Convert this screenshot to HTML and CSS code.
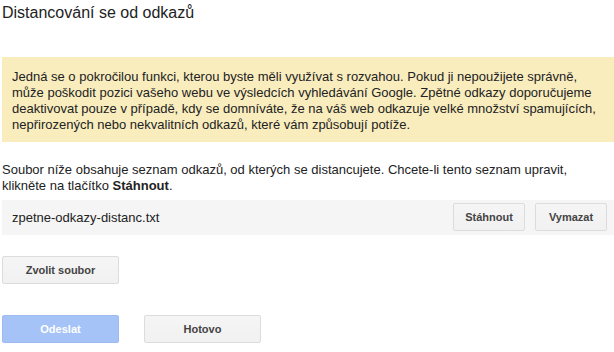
FILE: index.html
```html
<!DOCTYPE html>
<html>

<head>
  <meta charset="utf-8">
  <title>Distancování se od odkazů</title>
  <link rel="stylesheet" href="styles.css">
</head>

<body>
  <h1 class="title">Distancování se od odkazů</h1>

  <div class="warning">
    Jedná se o pokročilou funkci, kterou byste měli využívat s rozvahou. Pokud ji nepoužijete správně,
    může poškodit pozici vašeho webu ve výsledcích vyhledávání Google. Zpětné odkazy doporučujeme
    deaktivovat pouze v případě, kdy se domníváte, že na váš web odkazuje velké množství spamujících,
    nepřirozených nebo nekvalitních odkazů, které vám způsobují potíže.
  </div>

  <p class="desc">
    Soubor níže obsahuje seznam odkazů, od kterých se distancujete. Chcete-li tento seznam upravit,
    klikněte na tlačítko <b>Stáhnout</b>.
  </p>

  <div class="file-row">
    <span class="file-name">zpetne-odkazy-distanc.txt</span>
    <button class="btn">Stáhnout</button>
    <button class="btn">Vymazat</button>
  </div>

  <div class="choose">
    <button class="btn btn-wide">Zvolit soubor</button>
  </div>

  <div class="actions">
    <button class="btn btn-wide btn-primary" disabled>Odeslat</button>
    <button class="btn btn-wide">Hotovo</button>
  </div>
</body>

</html>
```

FILE: styles.css
```css
* {
  box-sizing: border-box;
}

body {
  margin: 0 0 0 2px;
  font-family: 'Liberation Sans', Arial, sans-serif;
  font-size: 13px;
  color: #222;
  background: white;
}

.title {
  margin: 0 0 35px;
  padding-top: 4px;
  font-size: 16px;
  font-weight: normal;
  line-height: 18px;
  color: #222;
}

.warning {
  background: #f9edbe;
  padding: 12px 10px 9px;
  line-height: 16px;
}

.desc {
  margin: 20px 0 6px;
  line-height: 16px;
}

.file-row {
  display: flex;
  align-items: center;
  gap: 10px;
  background: #f5f5f5;
  padding: 3px 7px 4px 10px;
}

.file-name {
  flex: 1;
}

.btn {
  height: 28px;
  min-width: 72px;
  padding: 0 8px;
  border: 1px solid #dcdcdc;
  border-radius: 2px;
  background: linear-gradient(#f5f5f5, #f1f1f1);
  color: #444;
  font-family: 'Liberation Sans', Arial, sans-serif;
  font-size: 11px;
  font-weight: bold;
  cursor: default;
}

.btn-wide {
  min-width: 117px;
}

.btn-primary {
  background: #a6c3f8;
  border-color: #9dbaf3;
  color: white;
}

.choose {
  margin-top: 21px;
}

.actions {
  display: flex;
  gap: 25px;
  margin-top: 31px;
}
```
